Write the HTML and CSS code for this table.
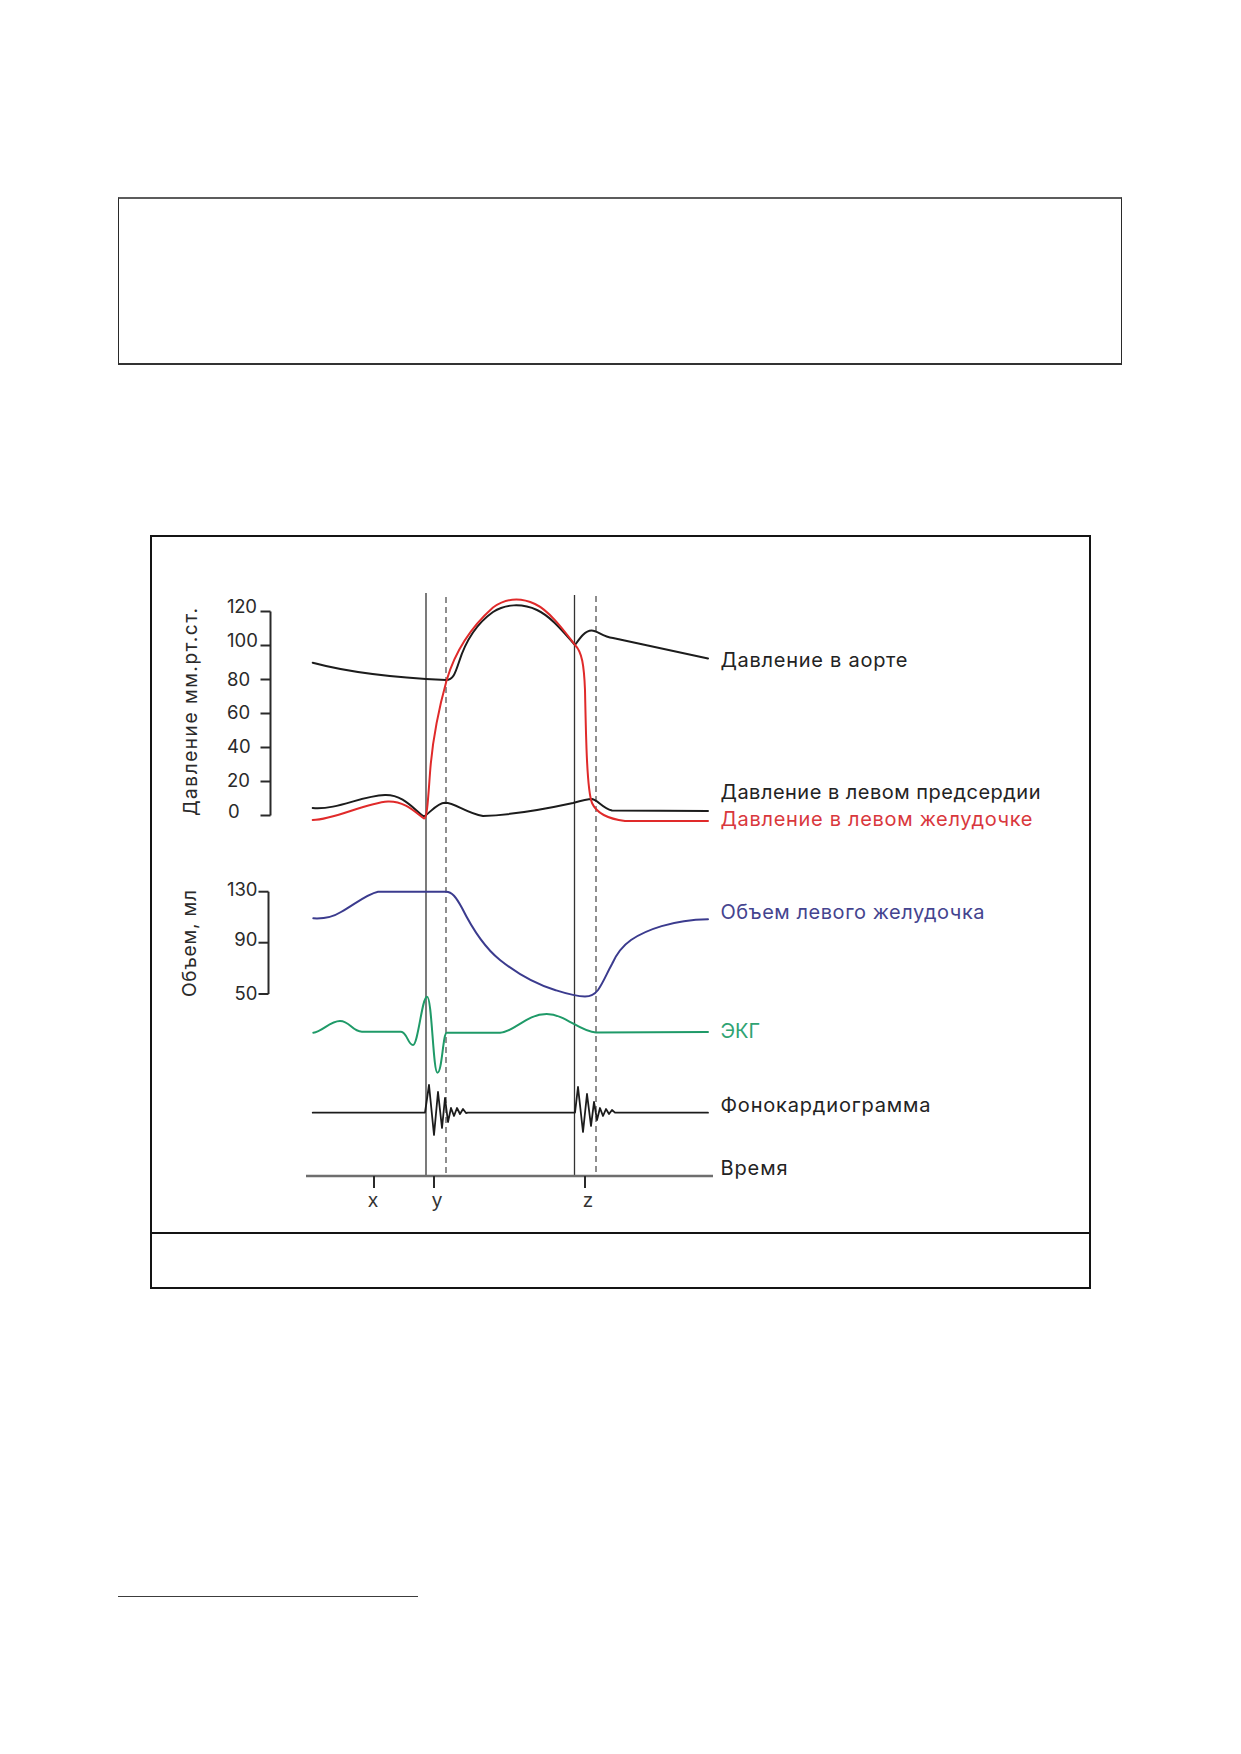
FILE: index.html
```html
<!DOCTYPE html>
<html lang="ru">
<head>
<meta charset="utf-8">
<title>Сердечный цикл</title>
<link rel="stylesheet" href="styles.css">
</head>
<body>
<div class="page">
  <div class="top-box"></div>

  <div class="figure">
    <svg class="chart" viewBox="152 537 937 695" width="937" height="695" xmlns="http://www.w3.org/2000/svg">
      <!-- axis titles -->
      <text class="axis-title" transform="translate(197,816) rotate(-90)" textLength="208" lengthAdjust="spacing">Давление мм.рт.ст.</text>
      <text class="axis-title" transform="translate(196,997) rotate(-90)" textLength="107" lengthAdjust="spacing">Объем, мл</text>

      <!-- pressure axis -->
      <g class="axis">
        <line x1="270.5" y1="611.5" x2="270.5" y2="815.5"/>
        <line x1="260.5" y1="611.5" x2="270.5" y2="611.5"/>
        <line x1="260.5" y1="645.5" x2="270.5" y2="645.5"/>
        <line x1="260.5" y1="679.5" x2="270.5" y2="679.5"/>
        <line x1="260.5" y1="713.5" x2="270.5" y2="713.5"/>
        <line x1="260.5" y1="747.5" x2="270.5" y2="747.5"/>
        <line x1="260.5" y1="781.5" x2="270.5" y2="781.5"/>
        <line x1="260.5" y1="815.5" x2="270.5" y2="815.5"/>
      </g>
      <g class="tick-label">
        <text x="227" y="612.5" textLength="30" lengthAdjust="spacing">120</text>
        <text x="227" y="646.5" textLength="31" lengthAdjust="spacing">100</text>
        <text x="227" y="685.5">80</text>
        <text x="227" y="719">60</text>
        <text x="227" y="752.5">40</text>
        <text x="227" y="786.5">20</text>
        <text x="228" y="818">0</text>
      </g>

      <!-- volume axis -->
      <g class="axis">
        <line x1="268.5" y1="891.7" x2="268.5" y2="994"/>
        <line x1="258.5" y1="891.7" x2="268.5" y2="891.7"/>
        <line x1="258.5" y1="942.7" x2="268.5" y2="942.7"/>
        <line x1="258.5" y1="994" x2="268.5" y2="994"/>
      </g>
      <g class="tick-label end">
        <text x="257.5" y="895.8">130</text>
        <text x="257.5" y="945.8">90</text>
        <text x="257.5" y="999.8">50</text>
      </g>

      <!-- phase lines -->
      <g class="phase">
        <line x1="426" y1="593" x2="426" y2="1176"/>
        <line x1="574.5" y1="595" x2="574.5" y2="1176"/>
      </g>
      <g class="phase dashed">
        <line x1="446" y1="597" x2="446" y2="1176"/>
        <line x1="596" y1="596" x2="596" y2="1176"/>
      </g>

      <!-- aortic pressure -->
      <path class="curve black" d="M312.7,662.7 C340,670 380,677 446,680 C453,680 455,674 459,662 C465,643 476,624 493,612 C505,604 522,603 537,610 C552,617 565,634 575,645 C580,638 585,630.5 591.5,630.5 C598,630.5 602,637 613,638 L708,658.5"/>
      <!-- left atrial pressure -->
      <path class="curve black" d="M312.7,808 C338,810 360,796 385,795 C404,794.5 414,810 424,816.5 C431,812 437,803 445,802.7 C455,802.7 466,813 483,816 C512,815 550,808 573,803 C580,801 587,799 592,799 C598,800 602,808 612,810.5 L708,811"/>
      <!-- left ventricular pressure -->
      <path class="curve red" d="M312.7,820 C335,819.5 365,803 388,801.5 C405,801 415,812 424,818.5 C427,819 428,800 430,773 C432,745 437,715 446.7,680 C455,652 470,628 493,607.5 C505,599 520,597 535,604 C550,611 565,632 575,645 C582,652 584,665 585,690 C586,740 587,790 592,803 C596,812 605,818.5 625,821 L708,821"/>
      <!-- LV volume -->
      <path class="curve blue" d="M313.3,918.3 C325,919 333,917 341,912 C355,904 367,894 378,891.7 L446,891.7 C452,891.7 456,897 462,908 C472,928 485,948 500,960 C515,972 535,984 555,990 C566,993.5 575,996.5 585,996.5 C592,996.5 595,994 598,990 C603,983 607,973 612,964 C616,955 621,947 631,940 C646,930 672,920 708,919.3"/>
      <!-- ECG -->
      <path class="curve green" d="M313.3,1032.7 C322,1032 330,1021 340,1021 C350,1021 352,1031.7 362,1031.7 L401,1031.7 C407,1032 408,1045 413,1045 C418,1045 422,997 427,996.7 C432,996.5 433,1072.7 437.5,1072.7 C442,1072.7 443,1033 446.7,1032.7 L500,1032.7 C515,1032 526,1014 546.7,1014 C565,1014 580,1032 596,1032.5 L708,1032"/>
      <!-- phonocardiogram -->
      <path class="curve black thin" d="M312.7,1112.7 L425,1112.7 L429,1085 L434,1135 L438,1092 L442,1128 L445,1098 L448,1122 L451,1108 L454,1116 L457,1108 L460,1114 L463,1109 L466,1113 L468,1112.7 L575,1112.7 L578,1087 L583,1132 L587,1094 L591,1126 L594,1102 L597,1120 L600,1108 L603,1116 L606,1109 L609,1114 L612,1110 L615,1112.7 L708,1112.7"/>

      <!-- time axis -->
      <line class="time-axis" x1="306" y1="1176" x2="713" y2="1176"/>
      <g class="axis">
        <line x1="374" y1="1176" x2="374" y2="1188"/>
        <line x1="434" y1="1176" x2="434" y2="1188"/>
        <line x1="585" y1="1176" x2="585" y2="1188"/>
      </g>
      <g class="time-label">
        <text x="373" y="1207">x</text>
        <text x="437" y="1207">y</text>
        <text x="588" y="1207">z</text>
      </g>

      <!-- series labels -->
      <g class="series-label">
        <text x="720.5" y="667" textLength="187" lengthAdjust="spacing">Давление в аорте</text>
        <text x="720.5" y="799.3" textLength="320" lengthAdjust="spacing">Давление в левом предсердии</text>
        <text class="red-text" x="720.5" y="826" textLength="312" lengthAdjust="spacing">Давление в левом желудочке</text>
        <text class="blue-text" x="720.5" y="919.3" textLength="264" lengthAdjust="spacing">Объем левого желудочка</text>
        <text class="green-text" x="720.5" y="1038.3">ЭКГ</text>
        <text x="720.5" y="1111.7" textLength="210" lengthAdjust="spacing">Фонокардиограмма</text>
        <text x="720.5" y="1175" textLength="67" lengthAdjust="spacing">Время</text>
      </g>
    </svg>
    <div class="caption"></div>
  </div>

  <div class="footnote-rule"></div>
</div>
</body>
</html>
```

FILE: styles.css
```css
html, body {
  margin: 0;
  padding: 0;
  background: #ffffff;
}

body {
  font-family: "Inter", "Noto Sans", "DejaVu Sans", sans-serif;
  color: #222222;
}

.page {
  width: 1241px;
  padding-top: 197px;
  box-sizing: border-box;
}

.top-box {
  margin-left: 118px;
  width: 1004px;
  height: 168px;
  box-sizing: border-box;
  border: 1px solid #2a2a2a;
  border-top: 2px solid #5c5c5c;
  border-bottom: 2px solid #333333;
}

.figure {
  margin-top: 170px;
  margin-left: 150px;
  width: 941px;
  box-sizing: border-box;
  border: 2px solid #141414;
}

.chart {
  display: block;
}

.caption {
  height: 53px;
  border-top: 2px solid #141414;
}

.footnote-rule {
  margin-top: 307px;
  margin-left: 118px;
  width: 300px;
  height: 1px;
  background: #3c3c3c;
}

/* chart styles */
.axis-title {
  font-family: "Inter", "Noto Sans", sans-serif;
  font-size: 19px;
  fill: #2a2a2a;
}

.axis line {
  stroke: #2a2a2a;
  stroke-width: 2;
}

.tick-label text {
  font-family: "Inter", "Noto Sans", sans-serif;
  font-size: 18.5px;
  fill: #2a2a2a;
}

.tick-label.end text {
  text-anchor: end;
}

.phase line {
  stroke: #333333;
  stroke-width: 1.3;
}

.phase.dashed line {
  stroke: #444444;
  stroke-width: 1.2;
  stroke-dasharray: 6 4;
}

.curve {
  fill: none;
  stroke-width: 2;
  stroke-linejoin: round;
  stroke-linecap: round;
}

.curve.black { stroke: #1c1c1c; }
.curve.thin { stroke-width: 1.8; }
.curve.red { stroke: #e02a2a; }
.curve.blue { stroke: #3b3b8e; }
.curve.green { stroke: #1f9a68; }

.time-axis {
  stroke: #6e6e6e;
  stroke-width: 2.6;
}

.time-label text {
  font-family: "Liberation Sans", "DejaVu Sans", sans-serif;
  font-size: 20px;
  fill: #333333;
  text-anchor: middle;
}

.series-label text {
  font-family: "Inter", "Noto Sans", sans-serif;
  font-size: 20px;
  fill: #232323;
}

.series-label .red-text { fill: #d9383d; }
.series-label .blue-text { fill: #44448f; }
.series-label .green-text { fill: #2fa373; }
```
